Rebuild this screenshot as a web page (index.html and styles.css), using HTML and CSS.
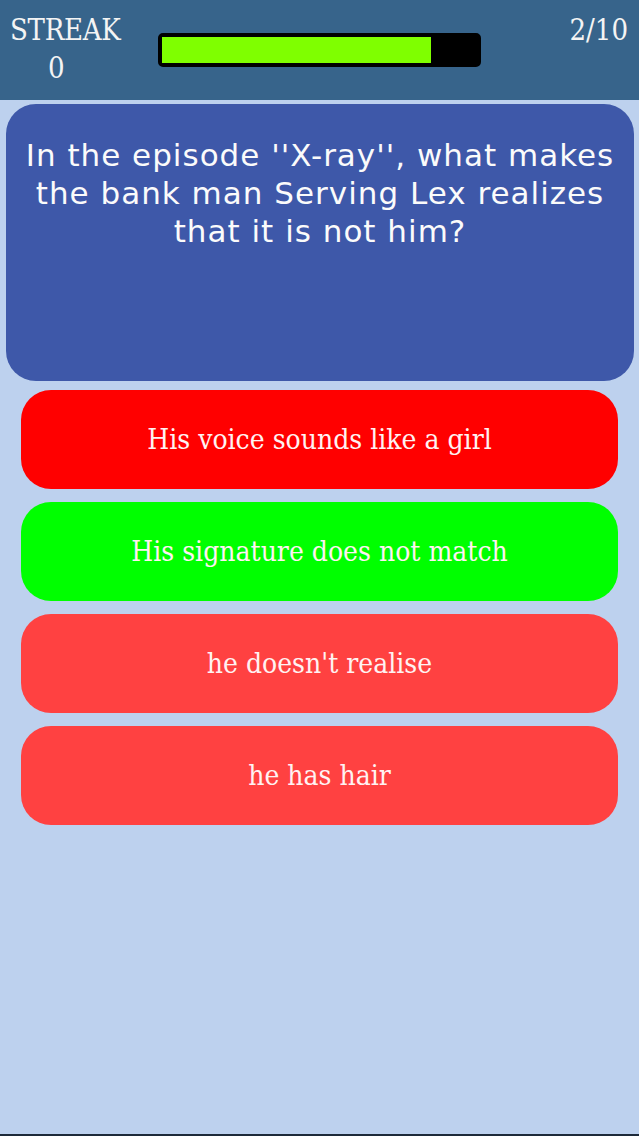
FILE: index.html
```html
<!DOCTYPE html>
<html lang="en">
<head>
    <meta charset="UTF-8">
    <meta name="viewport" content="width=device-width, initial-scale=1.0">
    <title>Quiz</title>
    <link rel="stylesheet" href="styles.css">
</head>
<body>

<div class="topbar">
    <div class="streak">
        <span class="streak-label">STREAK</span>
        <span class="streak-count" id="streak-count">0</span>
    </div>
    <div class="progress">
        <div class="progress-fill" style="width: 85.4%"></div>
    </div>
    <div class="counter" id="counter">2/10</div>
</div>

<div class="question">
    <p>In the episode ''X-ray'', what makes the bank man Serving Lex realizes that it is not him?</p>
</div>

<div class="answers">
    <button class="answer wrong">His voice sounds like a girl</button>
    <button class="answer right">His signature does not match</button>
    <button class="answer">he doesn't realise</button>
    <button class="answer">he has hair</button>
</div>

<div class="bottom-line"></div>

</body>
</html>
```

FILE: styles.css
```css
html, body {
    height: 100%;
}

body {
    margin: 0;
    background: #bdd1ee;
    display: flex;
    flex-direction: column;
    font-family: "DejaVu Serif", serif;
}

.topbar {
    height: 100px;
    background: #37648b;
    display: grid;
    grid-template-columns: 1fr 323px 1fr;
    align-items: start;
    color: #f4f4f4;
    flex-shrink: 0;
}

.streak {
    display: flex;
    flex-direction: column;
    padding: 11px 0 0 10px;
    font-size: 29px;
    line-height: 38px;
    letter-spacing: -0.3px;
    font-stretch: condensed;
}

.streak-count {
    padding-left: 38px;
}

.progress {
    align-self: center;
    height: 34px;
    box-sizing: border-box;
    background: #000;
    border: 4px solid #000;
    border-radius: 5px;
}

.progress-fill {
    height: 100%;
    background: #7fff00;
}

.counter {
    justify-self: end;
    padding: 11px 11px 0 0;
    font-size: 29px;
    line-height: 38px;
    font-stretch: condensed;
}

.question {
    margin: 4px 5px 0 6px;
    height: 277px;
    background: #3e58a9;
    border-radius: 30px;
    flex-shrink: 0;
}

.question p {
    margin: 0;
    padding: 32px 12px 0;
    text-align: center;
    color: #fbfbfb;
    font-family: "DejaVu Sans", sans-serif;
    font-size: 31px;
    letter-spacing: 1px;
    line-height: 38px;
}

.answers {
    display: flex;
    flex-direction: column;
    gap: 13px;
    padding: 9px 21px 0;
}

.answer {
    height: 99px;
    border: none;
    border-radius: 30px;
    background: #ff4141;
    color: #fff2f2;
    font-family: "DejaVu Serif", serif;
    font-stretch: condensed;
    font-size: 28px;
    cursor: pointer;
}

.answer.wrong {
    background: #ff0000;
}

.answer.right {
    background: #00ff00;
}

.bottom-line {
    margin-top: auto;
    height: 2px;
    background: #1d2a3a;
}
```
